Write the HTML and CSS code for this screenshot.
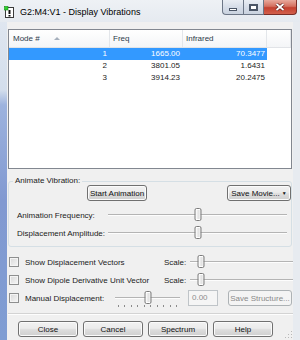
FILE: index.html
```html
<!DOCTYPE html>
<html lang="en">
<head>
    <meta charset="UTF-8">
    <title>G2:M4:V1 - Display Vibrations</title>
    <link rel="stylesheet" href="styles.css">
</head>
<body>
    <div class="window">
        <div class="titlebar">
            <svg class="app-icon" width="11" height="12" viewBox="0 0 11 12">
                <rect x="1.5" y="1.5" width="8" height="10" fill="#fff" stroke="#3a3a3a"/>
                <rect x="4.5" y="4" width="2" height="4" fill="#111"/>
                <rect x="4.5" y="9" width="2" height="1.5" fill="#111"/>
                <rect x="0.5" y="0.5" width="3.5" height="3.5" fill="#2fd12f" stroke="#178a17" stroke-width="0.6"/>
            </svg>
            <span class="title">G2:M4:V1 - Display Vibrations</span>
            <div class="caption-btns">
                <div class="cap-btn min"><span></span></div>
                <div class="cap-btn max"><span></span></div>
                <div class="cap-btn close">
                    <svg width="10" height="8" viewBox="0 0 10 8">
                        <path d="M1.5 1 L8.5 7 M8.5 1 L1.5 7" stroke="#5a1d18" stroke-width="3.2"/>
                        <path d="M1.5 1 L8.5 7 M8.5 1 L1.5 7" stroke="#fff" stroke-width="1.8"/>
                    </svg>
                </div>
            </div>
        </div>

        <div class="client">
            <div class="listview">
                <div class="lv-header">
                    <div class="col c1">Mode # <span class="sort"></span></div>
                    <div class="col c2">Freq</div>
                    <div class="col c3">Infrared</div>
                    <div class="col c4"></div>
                </div>
                <div class="lv-row selected">
                    <div class="cell c1">1</div>
                    <div class="cell c2">1665.00</div>
                    <div class="cell c3">70.3477</div>
                </div>
                <div class="lv-row">
                    <div class="cell c1">2</div>
                    <div class="cell c2">3801.05</div>
                    <div class="cell c3">1.6431</div>
                </div>
                <div class="lv-row">
                    <div class="cell c1">3</div>
                    <div class="cell c2">3914.23</div>
                    <div class="cell c3">20.2475</div>
                </div>
            </div>

            <fieldset class="group">
                <legend>Animate Vibration:</legend>
                <div class="anim-buttons">
                    <button class="btn start-btn">Start Animation</button>
                    <button class="btn movie-btn">Save Movie... <span class="drop">&#9660;</span></button>
                </div>
                <div class="slider-row">
                    <span class="slider-label">Animation Frequency:</span>
                    <div class="slider">
                        <div class="track"></div>
                        <div class="thumb" style="left: 50%"></div>
                    </div>
                </div>
                <div class="slider-row">
                    <span class="slider-label">Displacement Amplitude:</span>
                    <div class="slider">
                        <div class="track"></div>
                        <div class="thumb" style="left: 50%"></div>
                    </div>
                </div>
            </fieldset>

            <div class="options">
                <div class="opt-row">
                    <span class="checkbox"></span>
                    <span class="opt-label">Show Displacement Vectors</span>
                    <span class="scale-label">Scale:</span>
                    <div class="slider">
                        <div class="track"></div>
                        <div class="thumb" style="left: 11%"></div>
                    </div>
                </div>
                <div class="opt-row">
                    <span class="checkbox"></span>
                    <span class="opt-label">Show Dipole Derivative Unit Vector</span>
                    <span class="scale-label">Scale:</span>
                    <div class="slider">
                        <div class="track"></div>
                        <div class="thumb" style="left: 11%"></div>
                    </div>
                </div>
                <div class="opt-row">
                    <span class="checkbox"></span>
                    <span class="manual-label">Manual Displacement:</span>
                    <div class="slider manual">
                        <div class="track"></div>
                        <div class="ticks"></div>
                        <div class="thumb" style="left: 51%"></div>
                    </div>
                    <div class="textbox">0.00</div>
                    <button class="btn disabled save-btn">Save Structure...</button>
                </div>
            </div>

            <div class="separator"></div>

            <div class="dialog-buttons">
                <button class="btn">Close</button>
                <button class="btn">Cancel</button>
                <button class="btn">Spectrum</button>
                <button class="btn">Help</button>
                <svg class="grip" width="8" height="8" viewBox="0 0 8 8">
                    <rect x="6" y="0" width="1" height="1" fill="#b8b8b8"/>
                    <rect x="3" y="3" width="1" height="1" fill="#b8b8b8"/>
                    <rect x="6" y="3" width="1" height="1" fill="#b8b8b8"/>
                    <rect x="0" y="6" width="1" height="1" fill="#b8b8b8"/>
                    <rect x="3" y="6" width="1" height="1" fill="#b8b8b8"/>
                    <rect x="6" y="6" width="1" height="1" fill="#b8b8b8"/>
                </svg>
            </div>
        </div>
    </div>
</body>
</html>
```

FILE: styles.css
```css
* {
    margin: 0;
    padding: 0;
    box-sizing: border-box;
}

body {
    width: 300px;
    height: 340px;
    overflow: hidden;
    font-family: "Liberation Sans", Arial, sans-serif;
    font-size: 8px;
    color: #1b1b1b;
    background: #fff;
    white-space: nowrap;
}

/* window frame: aero glass, blue on the left strip */
.window {
    height: 340px;
    padding: 0 7px;
    display: flex;
    flex-direction: column;
    background:
        linear-gradient(to bottom, #e3e9f1 0, #d3deec 90px, #9db3de 105px, #8199d1 200px, #7f9dd3 340px) 0 0 / 7px 100% no-repeat,
        #e7ebf0;
}

.titlebar {
    height: 22px;
    margin: 0 -7px;
    padding-left: 4px;
    display: flex;
    align-items: flex-start;
    background: linear-gradient(to bottom, #eef1f5, #e5eaf0);
}

.app-icon {
    margin-top: 6px;
}

.title {
    margin: 7px 0 0 5px;
    font-size: 9px;
    color: #000;
}

.caption-btns {
    margin-left: auto;
    margin-right: 3px;
    display: flex;
    height: 15px;
}

.cap-btn {
    height: 15px;
    border: 1px solid #6c7686;
    border-top: none;
    display: flex;
    align-items: center;
    justify-content: center;
}

.cap-btn.min {
    width: 21px;
    border-radius: 0 0 0 4px;
    border-right: none;
    background: linear-gradient(to bottom, #e9edf3, #d6dde8 50%, #c9d2df);
}

.cap-btn.max {
    width: 21px;
    background: linear-gradient(to bottom, #e9edf3, #d6dde8 50%, #c9d2df);
}

.cap-btn.min span {
    width: 8px;
    height: 3px;
    margin-top: 4px;
    background: #fff;
    border: 1px solid #4a5566;
}

.cap-btn.max span {
    width: 9px;
    height: 7px;
    background: #fff;
    border: 1px solid #4a5566;
    box-shadow: inset 0 0 0 1px #4a5566;
}

.cap-btn.close {
    width: 33px;
    border-left: none;
    border-color: #7a2d26;
    border-radius: 0 0 4px 0;
    background: linear-gradient(to bottom, #e8a99c, #d4705f 45%, #c4402f 55%, #d2604c);
}

.client {
    flex: 1;
    padding: 7px 0 0 1px;
    background: #f0f0f0;
    display: flex;
    flex-direction: column;
}

/* list view */
.listview {
    height: 140px;
    margin-right: 1px;
    background: #fff;
    border: 1px solid #828790;
}

.lv-header {
    height: 18px;
    display: flex;
    background: linear-gradient(to bottom, #ffffff, #f4f5f7);
    border-bottom: 1px solid #e1e3e7;
}

.lv-header .col {
    display: flex;
    align-items: center;
    padding-left: 4px;
    color: #2c3a4a;
    border-right: 1px solid #e3e6ea;
}

.c1 { width: 101px; }
.c2 { width: 73px; }
.c3 { width: 84px; }
.c4 { flex: 1; }

.lv-header .c2,
.lv-header .c3 {
    padding-left: 3px;
}

.sort {
    margin-left: 14px;
    border-left: 3px solid transparent;
    border-right: 3px solid transparent;
    border-bottom: 3px solid #a5afbc;
}

.lv-row {
    height: 12px;
    display: flex;
    line-height: 12px;
}

.lv-row .cell {
    text-align: right;
    padding-right: 3px;
    color: #1b1b1b;
}

.lv-row .c3 {
    padding-right: 2px;
}

.lv-row.selected .cell {
    background: #3399ff;
    color: #fff;
}

/* group box */
.group {
    margin: 7px 0 0 0;
    width: 284px;
    border: 1px solid #d5dfe5;
    border-radius: 3px;
    padding: 0 0 4px 0;
}

.group legend {
    margin-left: 4px;
    padding: 0 2px;
    line-height: 10px;
}

.anim-buttons {
    display: flex;
    margin-top: -1px;
}

.btn {
    height: 16px;
    padding: 0;
    font-family: inherit;
    font-size: 8px;
    color: #111;
    white-space: nowrap;
    border: 1px solid #707070;
    border-radius: 3px;
    background: linear-gradient(to bottom, #f2f2f2 0%, #ebebeb 45%, #dddddd 55%, #cfcfcf 100%);
    box-shadow: inset 0 0 0 1px #fbfbfb;
}

.start-btn {
    width: 60px;
    margin-left: 78px;
}

.movie-btn {
    width: 64px;
    margin-left: auto;
}

.drop {
    font-size: 5px;
    vertical-align: 1px;
}

.slider-row {
    height: 18px;
    display: flex;
    align-items: center;
    padding: 0 4px 0 8px;
}

.anim-buttons + .slider-row {
    margin-top: 5px;
}

.slider-label {
    width: 91px;
}

.slider {
    flex: 1;
    height: 14px;
    position: relative;
    display: flex;
    align-items: center;
}

.track {
    flex: 1;
    height: 2px;
    border-top: 1px solid #b4b4b4;
    border-bottom: 1px solid #fdfdfd;
}

.thumb {
    position: absolute;
    top: 0;
    width: 7px;
    height: 13px;
    transform: translateX(-50%);
    border: 1px solid #7c7c7c;
    border-radius: 2px;
    background: linear-gradient(to right, #fafafa, #e3e3e3 60%, #d2d2d2);
    box-shadow: inset 0 0 0 1px #fff;
}

/* checkbox options */
.options {
    margin-top: 6px;
    display: flex;
    flex-direction: column;
}

.opt-row {
    height: 18px;
    display: flex;
    align-items: center;
    padding-left: 1px;
}

.checkbox {
    width: 10px;
    height: 10px;
    border: 1px solid #8e8f8f;
    background: linear-gradient(135deg, #d8d8d8, #f6f6f6);
    box-shadow: inset 0 0 0 1px #f4f4f4;
    margin-right: 6px;
}

.opt-label {
    width: 139px;
}

.scale-label {
    width: 26px;
}

.manual-label {
    width: 90px;
}

.slider.manual {
    flex: none;
    width: 65px;
}

.ticks {
    position: absolute;
    left: 3px;
    right: 2px;
    bottom: -2px;
    height: 2px;
    background: repeating-linear-gradient(to right, #8a8a8a 0 1px, transparent 1px 6.5px);
}

.textbox {
    width: 30px;
    height: 16px;
    margin-left: 8px;
    padding-left: 3px;
    line-height: 14px;
    color: #8d8d8d;
    background: #f5f5f5;
    border: 1px solid #bfc4c8;
}

.btn.disabled {
    color: #8a8a8a;
    border-color: #adb2b5;
    background: #f4f4f4;
    box-shadow: none;
}

.save-btn {
    width: 64px;
    margin-left: 10px;
}

.separator {
    margin-top: 6px;
    border-top: 1px solid #d3d3d3;
    border-bottom: 1px solid #fdfdfd;
}

.dialog-buttons {
    margin-top: 6px;
    padding-left: 10px;
    display: flex;
    gap: 5px;
}

.dialog-buttons .btn {
    width: 60px;
}

.grip {
    margin: 10px 0 0 auto;
}
```
